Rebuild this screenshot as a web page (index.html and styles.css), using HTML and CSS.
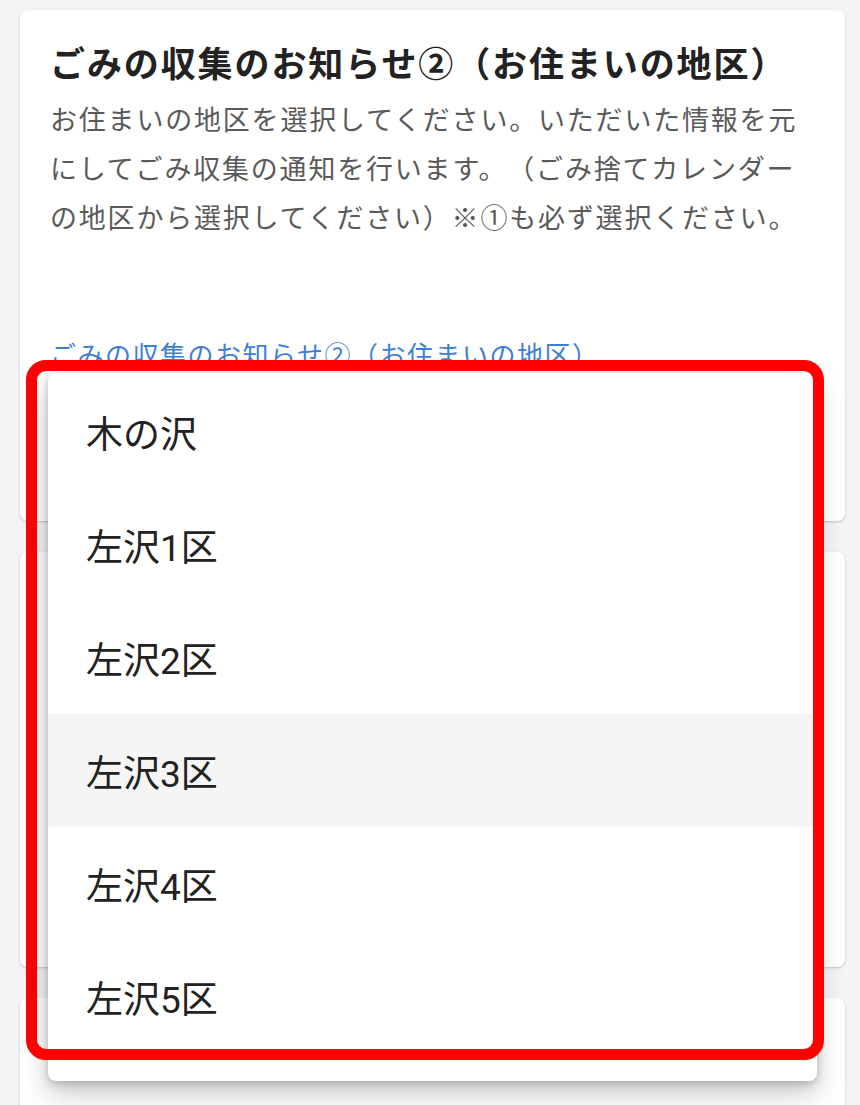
FILE: index.html
```html
<!DOCTYPE html>
<html lang="ja">
<head>
<meta charset="utf-8">
<title>ごみの収集のお知らせ②</title>
<link rel="stylesheet" href="styles.css">
</head>
<body>
<div class="page">
  <section class="card card-first">
    <h2 class="title">ごみの収集のお知らせ②（お住まいの地区）</h2>
    <p class="desc">お住まいの地区を選択してください。いただいた情報を元にしてごみ収集の通知を行います。（ごみ捨てカレンダーの地区から選択してください）※①も必ず選択ください。</p>
    <div class="label">ごみの収集のお知らせ②（お住まいの地区）</div>
    <div class="select-field"></div>
  </section>
  <section class="card card-second"></section>
  <section class="card card-third"></section>

  <div class="menu">
    <ul class="menu-list">
      <li class="menu-item">木の沢</li>
      <li class="menu-item">左沢1区</li>
      <li class="menu-item">左沢2区</li>
      <li class="menu-item is-hover">左沢3区</li>
      <li class="menu-item">左沢4区</li>
      <li class="menu-item">左沢5区</li>
    </ul>
  </div>
  <div class="highlight-box"></div>
</div>
</body>
</html>
```

FILE: styles.css
```css
html, body {
  margin: 0;
  padding: 0;
}
body {
  background: #f3f4f6;
  font-family: Roboto, "Noto Sans CJK JP", "Noto Sans", sans-serif;
  color: #222;
  overflow: hidden;
  height: 1105px;
  text-spacing-trim: space-all;
}
.page {
  position: relative;
  padding: 10px 15px 0 20px;
  display: flex;
  flex-direction: column;
  gap: 31px;
}
.card {
  background: #fff;
  border-radius: 8px;
  box-shadow: 0 1px 3px rgba(0, 0, 0, 0.16), 0 1px 2px rgba(0, 0, 0, 0.06);
}
.card-first {
  padding: 30px 30px 31px 30px;
}
.card-second {
  height: 415px;
}
.card-third {
  height: 160px;
}
.title {
  margin: 0;
  font-family: "Noto Sans CJK JP", sans-serif;
  font-weight: 700;
  font-size: 35px;
  letter-spacing: 1.9px;
  line-height: 44px;
  color: #222;
  white-space: nowrap;
  text-spacing-trim: space-all;
}
.desc {
  margin: 10px 0 0 0;
  font-family: "Noto Sans CJK JP", sans-serif;
  font-weight: 400;
  font-size: 27px;
  letter-spacing: 1.8px;
  line-height: 49px;
  color: #5a5a5a;
  text-spacing-trim: space-all;
}
.label {
  margin-top: 95px;
  font-family: "Noto Sans CJK JP", sans-serif;
  font-size: 26px;
  letter-spacing: 1.5px;
  line-height: 36px;
  color: #3d7fd6;
  white-space: nowrap;
  text-spacing-trim: space-all;
}
.select-field {
  height: 118px;
}
.menu {
  position: absolute;
  left: 48px;
  top: 373px;
  width: 769px;
  height: 708px;
  background: #fff;
  border-radius: 8px;
  overflow: hidden;
  box-shadow: 0 12px 28px rgba(0, 0, 0, 0.22), 0 4px 10px rgba(0, 0, 0, 0.14), 0 0 6px rgba(0, 0, 0, 0.08);
}
.menu-list {
  list-style: none;
  margin: 0;
  padding: 2px 0 0 0;
}
.menu-item {
  height: 113px;
  display: flex;
  align-items: center;
  padding-left: 38px;
  font-family: Roboto, "Noto Sans CJK JP", sans-serif;
  font-size: 37px;
  color: #222;
}
.menu-item.is-hover {
  background: #f5f5f5;
}
.highlight-box {
  position: absolute;
  left: 26px;
  top: 360px;
  width: 798px;
  height: 700px;
  box-sizing: border-box;
  border: 11px solid #ff0000;
  border-radius: 20px;
  pointer-events: none;
}
```
